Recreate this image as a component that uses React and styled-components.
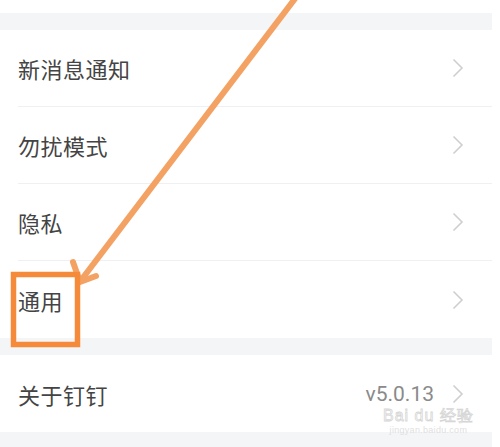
import React from 'react'
import styled, { createGlobalStyle } from 'styled-components'

const Global = createGlobalStyle`
  html, body { margin: 0; padding: 0; background: #fff; }
  body { font-family: "Noto Sans CJK SC", "Noto Sans", sans-serif; }
`

const Page = styled.div`
  position: relative;
  width: 500px;
  height: 447px;
  overflow: hidden;
  background: #fff;
`

const Screen = styled.div`
  width: 492px;
  display: flex;
  flex-direction: column;
  padding-top: 13px;
`

const Gap = styled.div`
  height: ${p => p.h}px;
  background: #f4f5f6;
`

const Group = styled.div`
  background: #fff;
  display: flex;
  flex-direction: column;
`

const Row = styled.div`
  height: ${p => (p.last ? 77 : 76)}px;
  margin-left: 18px;
  padding-right: 28px;
  display: flex;
  align-items: center;
  border-bottom: ${p => (p.last ? 'none' : '1px solid #eef0f1')};
`

const Label = styled.span`
  flex: 1;
  font-size: 22px;
  color: #444;
  letter-spacing: 0.5px;
`

const Value = styled.span`
  font-family: "Roboto", "Noto Sans", sans-serif;
  font-size: 21px;
  color: #8a8a8a;
  margin-right: 18px;
`

const Overlay = styled.svg`
  position: absolute;
  left: 0;
  top: 0;
  pointer-events: none;
`

const Watermark = styled.div`
  position: absolute;
  left: 383px;
  top: 407px;
  display: flex;
  flex-direction: column;
  align-items: center;
  font-family: "Liberation Sans", sans-serif;
  pointer-events: none;
`

const Brand = styled.div`
  font-size: 16px;
  line-height: 18px;
  color: #fff;
  -webkit-text-stroke: 0.8px #d6d6d6;
  letter-spacing: 1px;
`

const Site = styled.div`
  font-size: 9px;
  line-height: 11px;
  color: #e0e0e0;
  letter-spacing: 0.3px;
`

const Chevron = () => (
  <svg width="12" height="20" viewBox="0 0 12 20">
    <path d="M1.5 1.5 L10 10 L1.5 18.5" fill="none" stroke="#cfcfcf" strokeWidth="1.6" />
  </svg>
)

const mainItems = ['新消息通知', '勿扰模式', '隐私', '通用']

export default function App() {
  return (
    <Page>
      <Global />
      <Screen>
        <Gap h={17} />
        <Group>
          {mainItems.map((t, i) => (
            <Row key={t} last={i === mainItems.length - 1}>
              <Label>{t}</Label>
              <Chevron />
            </Row>
          ))}
        </Group>
        <Gap h={17} />
        <Group>
          <Row last>
            <Label>关于钉钉</Label>
            <Value>v5.0.13</Value>
            <Chevron />
          </Row>
        </Group>
        <Gap h={20} />
      </Screen>
      <Watermark>
        <Brand>Bai du 经验</Brand>
        <Site>jingyan.baidu.com</Site>
      </Watermark>
      <Overlay width="500" height="447">
        <line x1="297" y1="-4" x2="82" y2="279" stroke="#f3a263" strokeWidth="6" strokeLinecap="round" />
        <path d="M80 282 L73 262 M80 282 L96 276" stroke="#f3a263" strokeWidth="6" strokeLinecap="round" fill="none" />
        <rect x="13.5" y="274.5" width="64" height="70" fill="none" stroke="#f58a3a" strokeWidth="5.5" />
      </Overlay>
    </Page>
  )
}
